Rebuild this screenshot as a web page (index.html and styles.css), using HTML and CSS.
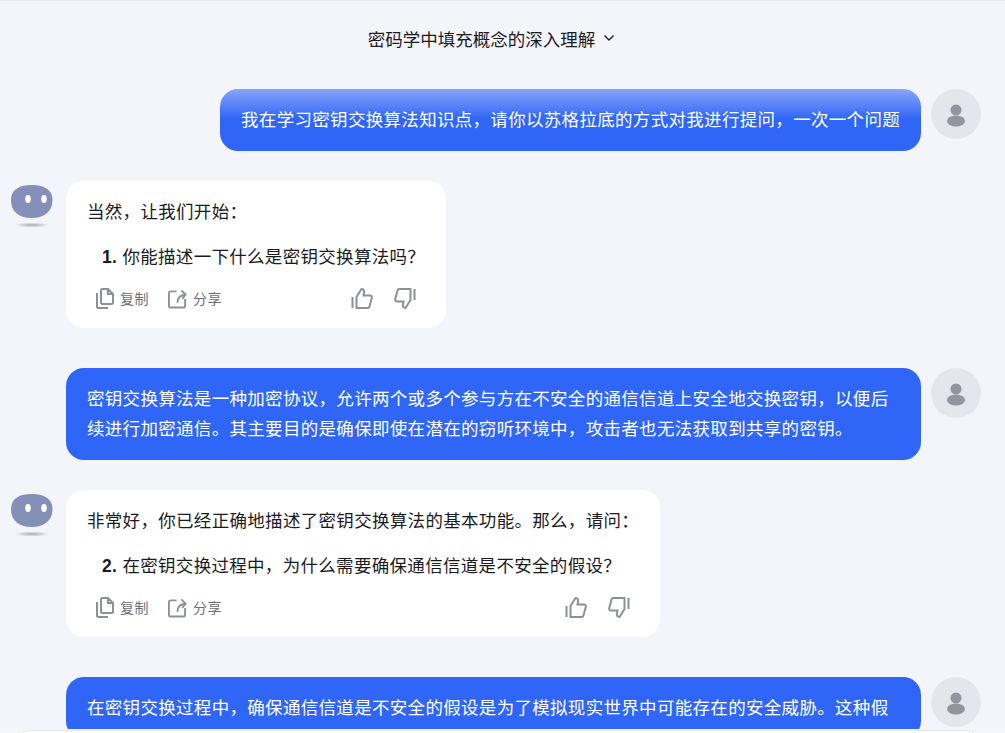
FILE: index.html
```html
<!DOCTYPE html>
<html>
<head>
<meta charset="UTF-8">
<title>密码学中填充概念的深入理解</title>
<link rel="stylesheet" href="styles.css">
</head>
<body>
	<div class="page">
		<div class="title">
			<span>密码学中填充概念的深入理解</span>
			<svg class="arrow" width="12" height="8" viewBox="0 0 12 8"><path d="M1.5 1.5L6 6l4.500-4.500" fill="none" stroke="#222" stroke-width="1.400"/></svg>
		</div>
		<div class="chat">
			<!-- 第一轮 -->
			<div class="row right">
				<div class="bubble user first">我在学习密钥交换算法知识点，请你以苏格拉底的方式对我进行提问，一次一个问题</div>
				<svg class="avatar" viewBox="0 0 50 50"><circle cx="25" cy="25" r="25" fill="#e5e6eb"/><circle cx="25" cy="21" r="5.500" fill="#94949e"/><ellipse cx="25" cy="32" rx="9" ry="5.500" fill="#94949e"/></svg>
			</div>
			<div class="row">
				<svg class="bot" viewBox="0 0 44 44"><defs><radialGradient id="sh"><stop offset="0" stop-color="#a9abb2"/><stop offset="1" stop-color="#f4f6fb"/></radialGradient></defs><path d="M21.500 2C33 2 42.500 6 42.500 17c0 12-9 18-21 18S1 29 1 17C1 6 10 2 21.500 2z" fill="#8490b8"/><ellipse cx="18" cy="16" rx="2.800" ry="4" fill="#fff"/><ellipse cx="34" cy="16" rx="2.800" ry="4" fill="#fff"/><ellipse cx="22" cy="42" rx="18" ry="2.500" fill="url(#sh)"/></svg>
				<div class="bubble bot_msg">
					<p>当然，让我们开始：</p>
					<p class="item"><b>1.</b> 你能描述一下什么是密钥交换算法吗？</p>
					<div class="tools">
						<span class="tool"><svg width="18" height="21" viewBox="0 0 18 21"><path d="M1 5v13.500A1.500 1.500 0 0 0 2.500 20H12M5 2.500A1.500 1.500 0 0 1 6.500 1H12l5 5v8.500a1.500 1.500 0 0 1-1.500 1.500h-9A1.500 1.500 0 0 1 5 14.500zM12 1v5h5"/></svg>复制</span>
						<span class="tool"><svg width="19" height="21" viewBox="0 0 20 21"><path d="M9 3H3a2 2 0 0 0-2 2v13a2 2 0 0 0 2 2h13a2 2 0 0 0 2-2v-7M10 15c0-5 2-8 8-8.500M14 2l4.500 4.500L15 11"/></svg>分享</span>
						<span class="thumbs">
							<svg width="22" height="21" viewBox="0 0 22 21"><path d="M1.500 9v11M5.500 9l5-8c2 0 3 1.500 2.500 3.500L12.500 7.500h6.500a1.800 1.800 0 0 1 1.800 2.200L18.500 18.500a2 2 0 0 1-2 1.500h-11z"/></svg>
							<svg width="22" height="21" viewBox="0 0 22 21"><path d="M20.500 12V1M16.500 12l-5 8c-2 0-3-1.500-2.500-3.500l.5-3H3a1.800 1.800 0 0 1-1.800-2.200L3.500 2.500a2 2 0 0 1 2-1.500h11z"/></svg>
						</span>
					</div>
				</div>
			</div>
			<!-- 第二轮 -->
			<div class="row right gap_big">
				<div class="bubble user">密钥交换算法是一种加密协议，允许两个或多个参与方在不安全的通信信道上安全地交换密钥，以便后续进行加密通信。其主要目的是确保即使在潜在的窃听环境中，攻击者也无法获取到共享的密钥。</div>
				<svg class="avatar" viewBox="0 0 50 50"><circle cx="25" cy="25" r="25" fill="#e5e6eb"/><circle cx="25" cy="21" r="5.500" fill="#94949e"/><ellipse cx="25" cy="32" rx="9" ry="5.500" fill="#94949e"/></svg>
			</div>
			<div class="row">
				<svg class="bot" viewBox="0 0 44 44"><path d="M21.500 2C33 2 42.500 6 42.500 17c0 12-9 18-21 18S1 29 1 17C1 6 10 2 21.500 2z" fill="#8490b8"/><ellipse cx="18" cy="16" rx="2.800" ry="4" fill="#fff"/><ellipse cx="34" cy="16" rx="2.800" ry="4" fill="#fff"/><ellipse cx="22" cy="42" rx="18" ry="2.500" fill="url(#sh)"/></svg>
				<div class="bubble bot_msg">
					<p>非常好，你已经正确地描述了密钥交换算法的基本功能。那么，请问：</p>
					<p class="item"><b>2.</b> 在密钥交换过程中，为什么需要确保通信信道是不安全的假设？</p>
					<div class="tools">
						<span class="tool"><svg width="18" height="21" viewBox="0 0 18 21"><path d="M1 5v13.500A1.500 1.500 0 0 0 2.500 20H12M5 2.500A1.500 1.500 0 0 1 6.500 1H12l5 5v8.500a1.500 1.500 0 0 1-1.500 1.500h-9A1.500 1.500 0 0 1 5 14.500zM12 1v5h5"/></svg>复制</span>
						<span class="tool"><svg width="19" height="21" viewBox="0 0 20 21"><path d="M9 3H3a2 2 0 0 0-2 2v13a2 2 0 0 0 2 2h13a2 2 0 0 0 2-2v-7M10 15c0-5 2-8 8-8.500M14 2l4.500 4.500L15 11"/></svg>分享</span>
						<span class="thumbs">
							<svg width="22" height="21" viewBox="0 0 22 21"><path d="M1.500 9v11M5.500 9l5-8c2 0 3 1.500 2.500 3.500L12.500 7.500h6.500a1.800 1.800 0 0 1 1.800 2.200L18.500 18.500a2 2 0 0 1-2 1.500h-11z"/></svg>
							<svg width="22" height="21" viewBox="0 0 22 21"><path d="M20.500 12V1M16.500 12l-5 8c-2 0-3-1.500-2.500-3.500l.5-3H3a1.800 1.800 0 0 1-1.800-2.200L3.500 2.500a2 2 0 0 1 2-1.500h11z"/></svg>
						</span>
					</div>
				</div>
			</div>
			<!-- 第三轮 -->
			<div class="row right gap_big">
				<div class="bubble user wide">在密钥交换过程中，确保通信信道是不安全的假设是为了模拟现实世界中可能存在的安全威胁。这种假</div>
				<svg class="avatar" viewBox="0 0 50 50"><circle cx="25" cy="25" r="25" fill="#e5e6eb"/><circle cx="25" cy="21" r="5.500" fill="#94949e"/><ellipse cx="25" cy="32" rx="9" ry="5.500" fill="#94949e"/></svg>
			</div>
		</div>
		<div class="composer"><div class="composer_box"></div></div>
	</div>
</body>
</html>
```

FILE: styles.css
```css
html,body{
	margin:0;
	height:100%;
	overflow:hidden;
}
.page{
	position:relative;
	height:733px;
	overflow:hidden;
	background:#f4f5fb;
	border-top:1px solid #e9eaee;
	box-sizing:border-box;
	font-family:"Liberation Sans","Noto Sans CJK SC",sans-serif;
	font-size:17.5px;
	color:#1b1b1f;
}
.title{
	display:flex;
	justify-content:center;
	align-items:center;
	gap:8px;
	height:74px;
	padding-right:22px;
}
.arrow{
	margin-top:-1px;
}
.chat{
	display:flex;
	flex-direction:column;
	gap:30px;
	margin-top:14px;
	padding:0 24px 0 10px;
}
.row{
	display:flex;
	align-items:flex-start;
	gap:12px;
}
.row.right{
	justify-content:flex-end;
	gap:10px;
}
.gap_big{
	margin-top:10px;
}
.bubble{
	padding:16px 21px;
	border-radius:18px;
	line-height:30px;
	letter-spacing:.31px;
}
.user{
	max-width:813px;
	background:#2f66f7;
	color:#fff;
}
.wide{
	width:813px;
}
.first{
	background:linear-gradient(180deg,#8aa4f9 0,#2f66f7 30px);
}
.bot_msg{
	background:#fff;
}
.bot_msg p{
	margin:0 0 15px;
}
.item{
	padding-left:15px;
}
.tools{
	display:flex;
	align-items:center;
	gap:19px;
	height:25px;
	margin:-1px 0 1px;
	padding:0 9px;
	font-size:14px;
	letter-spacing:.5px;
	color:#6d7078;
}
.tool{
	display:flex;
	align-items:center;
	gap:6px;
}
.tools svg{
	fill:none;
	stroke:#8c9098;
	stroke-width:2;
}
.thumbs{
	display:flex;
	gap:21px;
	margin-left:auto;
}
.avatar{
	flex:none;
	width:50px;
	height:50px;
}
.bot{
	flex:none;
	width:44px;
	height:44px;
	margin-top:2px;
}
.composer{
	position:absolute;
	left:0;
	right:0;
	bottom:0;
	height:4px;
	padding:1px 27px 0 18px;
	background:#f5f6fa;
	box-sizing:border-box;
}
.composer_box{
	height:20px;
	background:#fff;
	border:1px solid #e6e7ec;
	border-radius:14px;
}
```
